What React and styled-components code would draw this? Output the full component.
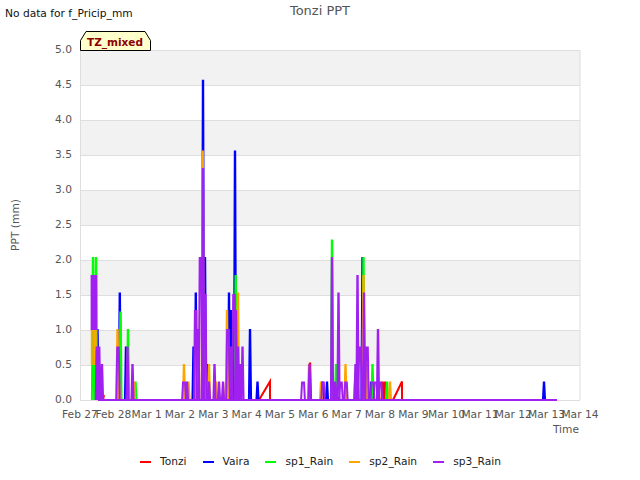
import React from "react";
import styled, { createGlobalStyle } from "styled-components";

const Global = createGlobalStyle`
  html, body { margin: 0; padding: 0; background: #fff; }
  body { font-family: "DejaVu Sans", sans-serif; }
`;

const Page = styled.div`
  width: 640px;
  height: 480px;
  display: flex;
  flex-direction: column;
  overflow: hidden;
  background: #fff;
`;

const Header = styled.header`
  height: 20px;
  display: grid;
  grid-template-columns: 1fr auto 1fr;
  align-items: start;
`;

const Note = styled.div`
  font-size: 10.67px;
  line-height: 12px;
  padding: 8px 0 0 5px;
  color: #111;
`;

const Title = styled.h1`
  margin: 0;
  font-size: 13px;
  font-weight: 400;
  line-height: 16px;
  padding-top: 3px;
  color: #555;
`;

const ChartSvg = styled.svg`
  display: block;
  width: 640px;
  height: 425px;
  flex: none;
`;

const Legend = styled.div`
  display: flex;
  justify-content: center;
  gap: 16px;
  padding: 10px 0 0 1px;
`;

const LegendItem = styled.div`
  display: flex;
  align-items: center;
  gap: 9px;
  font-size: 10.67px;
  line-height: 14px;
  color: #222;
`;

const Swatch = styled.span`
  width: 11px;
  height: 2px;
  background: ${(p) => p.$color};
`;

const TickText = styled.text`
  font-family: "DejaVu Sans", sans-serif;
  font-size: 10.67px;
  fill: #555;
`;

const TagText = styled.text`
  font-family: "DejaVu Sans", sans-serif;
  font-size: 10.5px;
  font-weight: 700;
  fill: #8b0000;
`;

const Y = (v) => 400 - v * 70;

const DAYS = ["Feb 27","Feb 28","Mar 1","Mar 2","Mar 3","Mar 4","Mar 5","Mar 6","Mar 7","Mar 8","Mar 9","Mar 10","Mar 11","Mar 12","Mar 13","Mar 14"];

const build = (spikes) => {
  let d = "";
  spikes.forEach(([x, v, w = 0.2, base = 0]) => {
    const slant = base === 0 ? 0.9 : 0;
    d += `M${x - w - slant} ${Y(base)}L${x - w} ${Y(v)}L${x + w} ${Y(v)}L${x + w + slant} ${Y(base)}`;
  });
  return d;
};

const SERIES = [
  { name: "Tonzi", color: "#ff0000", spikes: [[310, 0.52],[382.5, 0.25],[385, 0.25],[227, 0.25]], extra: "M259 400L270 381.5L270 400M393 400L402 381.5L402 400M103 400L104 395" },
  { name: "Vaira", color: "#0000ff", spikes: [[97.5,1.0],[119.8,1.52],[126,0.75],[193.5,0.75],[195.8,1.52],[203,4.56],[205,2.03],[207.5,0.5],[229,1.52],[230.8,1.27],[235,3.55],[250,1.0],[257.5,0.25],[322.5,0.25],[327,0.25],[362.5,2.03],[365,0.25],[371,0.25],[544,0.25]], extra: "M98 400L557 400" },
  { name: "sp1_Rain", color: "#00ff00", spikes: [[93,2.03],[96,2.03],[101,0.25],[120.5,1.25],[128,1.0],[135.5,0.25],[204,1.0],[235.7,1.77],[332,2.28],[336,0.5],[355,0.25],[363.5,2.03],[372.5,0.5],[387,0.25]] },
  { name: "sp2_Rain", color: "#ffa500", spikes: [[93,1.0,1.2,0.5],[95,1.0,0.8,0.7],[117.5,1.0],[119,0.25],[128,0.25],[184,0.5],[197,1.27],[188.5,0.25],[202.7,3.55],[209,0.5],[227,1.27],[238,1.52],[240,0.25],[309,0.5],[321,0.25],[345.5,0.5],[363.5,1.77],[367,0.5],[390,0.25],[358,0.25],[216,0.25],[226,0.25],[134,0.25]] },
  { name: "sp3_Rain", color: "#a020f0", spikes: [[92.5,1.77,0.9,1.0],[95.5,1.77,0.8,1.0],[97.5,0.75,0.9],[99,0.75,0.4],[102,0.5],[118,0.75,0.8],[127.5,0.75],[132.5,0.5],[184,0.25,1.0],[187,0.25],[195.5,1.27,0.6],[198,1.0,0.6],[200.5,2.03,0.8],[203,3.3],[205,1.5,0.6],[209,0.25],[214.5,0.5],[219,0.25],[223,0.25],[228,1.0,0.9],[231,0.75],[234,1.5,0.8],[236,1.27],[238,0.75],[240,0.5],[242.5,0.75],[303,0.25,1.0],[309.5,0.5],[323,0.25,0.8],[332,2.03],[335,0.25],[338.5,1.52],[341,0.25,0.8],[346,0.25,0.8],[355.5,0.5],[357.5,1.77],[360,0.75,0.8],[364,1.52],[367,0.75,0.8],[372.5,0.25,1.0],[375.5,0.25,1.0],[378,1.0],[380.5,0.25,0.8]], extra: "M98 400L557 400" },
];

const ytick = [0,0.5,1,1.5,2,2.5,3,3.5,4,4.5,5];

export default function App() {
  return (
    <Page>
      <Global />
      <Header>
        <Note>No data for f_Pricip_mm</Note>
        <Title>Tonzi PPT</Title>
        <span />
      </Header>
      <ChartSvg viewBox="0 20 640 425">
        {[4.5,3.5,2.5,1.5,0.5].map((v) => (
          <rect key={v} x="80" y={Y(v + 0.5)} width="500" height="35" fill="#f2f2f2" />
        ))}
        {ytick.map((v) => (
          <line key={v} x1="80" x2="580" y1={Y(v) + 0.5} y2={Y(v) + 0.5} stroke="#dedede" strokeWidth="1" />
        ))}
        <path d="M80.5 50V400M580 50V400" stroke="#dedede" strokeWidth="1" fill="none" />
        {SERIES.map((s) => (
          <path key={s.name} d={build(s.spikes) + (s.extra || "")} fill="none" stroke={s.color} strokeWidth="2" />
        ))}
        {ytick.map((v) => (
          <TickText key={v} x="72" y={Y(v) + 3} textAnchor="end">{v.toFixed(1)}</TickText>
        ))}
        {DAYS.map((d, i) => (
          <TickText key={d} x={80 + i * 33.33} y="418" textAnchor="middle">{d}</TickText>
        ))}
        <TickText x="579" y="433" textAnchor="end">Time</TickText>
        <TickText x="0" y="0" textAnchor="middle" transform="translate(19 225) rotate(-90)">PPT (mm)</TickText>
        <polygon points="80.5,50.5 80.5,40.5 86,31.5 145,31.5 150.5,40.5 150.5,50.5" fill="#ffffcc" stroke="#000" strokeWidth="1" />
        <TagText x="87" y="46">TZ_mixed</TagText>
      </ChartSvg>
      <Legend>
        {SERIES.map((s) => (
          <LegendItem key={s.name}>
            <Swatch $color={s.color} />
            {s.name}
          </LegendItem>
        ))}
      </Legend>
    </Page>
  );
}
